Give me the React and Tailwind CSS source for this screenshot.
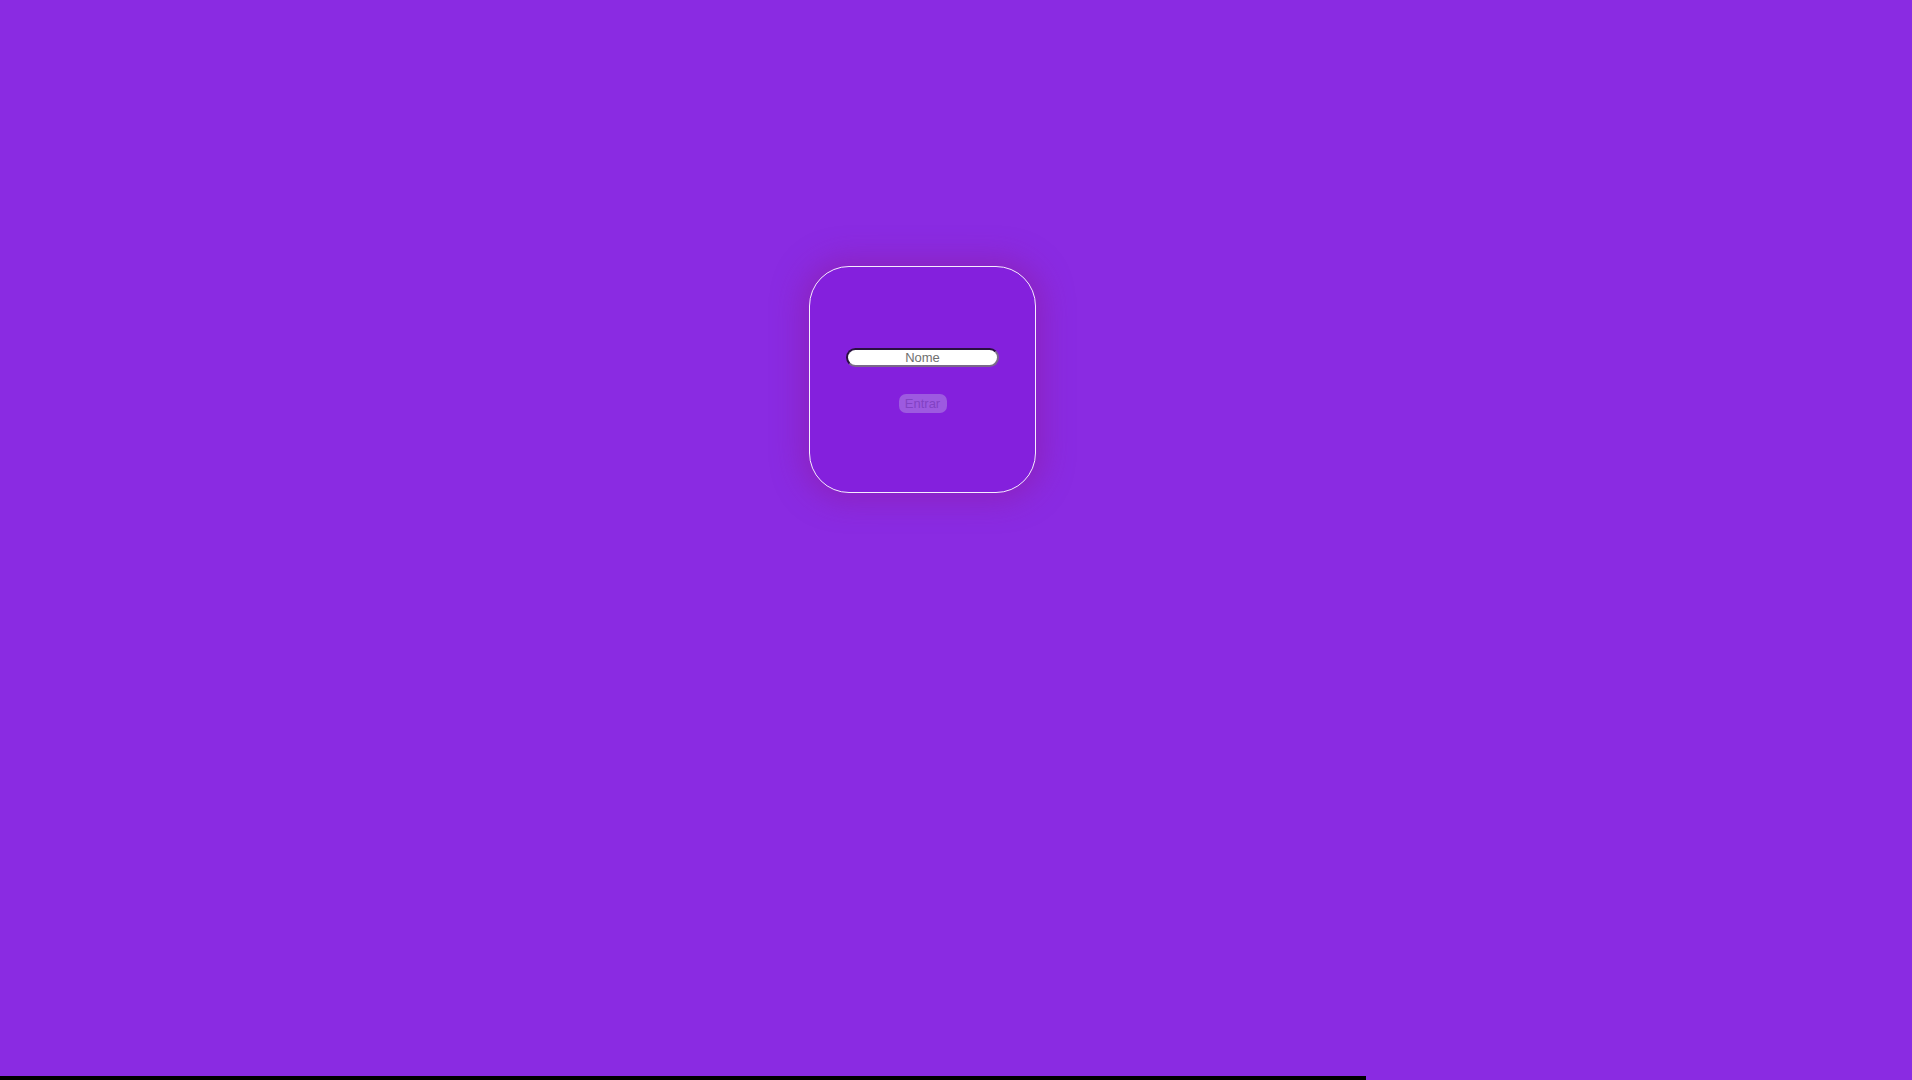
export default function App() {
  return (
    <div className="w-[1912px] h-[1080px] bg-[#8a2be2] flex flex-col" style={{ fontFamily: '"Liberation Sans", Arial, sans-serif' }}>
      <div className="flex-1 pl-[809px] pt-[266px]">
        {/* login card */}
        <div className="w-[227px] h-[227px] rounded-[40px] border border-[#f6ecff] bg-[#8420dd] shadow-[0_0_28px_8px_rgba(140,30,170,0.6)] flex flex-col items-center pt-[81px]">
          <input
            placeholder="Nome"
            className="w-[153px] h-[19px] rounded-full bg-white text-center text-[13px] text-gray-700 placeholder:text-[#6f6f6f] border-2 border-t-[#2a1040] border-l-[#2a1040] border-r-[#7a6a8a] border-b-[#7a6a8a] outline-none leading-none"
          />
          <button className="mt-[27px] w-[48px] h-[19px] rounded-[7px] bg-[#9d5ae0] text-[13px] text-[#8242c4] leading-none">
            Entrar
          </button>
        </div>
      </div>
      <div className="w-[1366px] h-[4px] bg-black" />
    </div>
  );
}
